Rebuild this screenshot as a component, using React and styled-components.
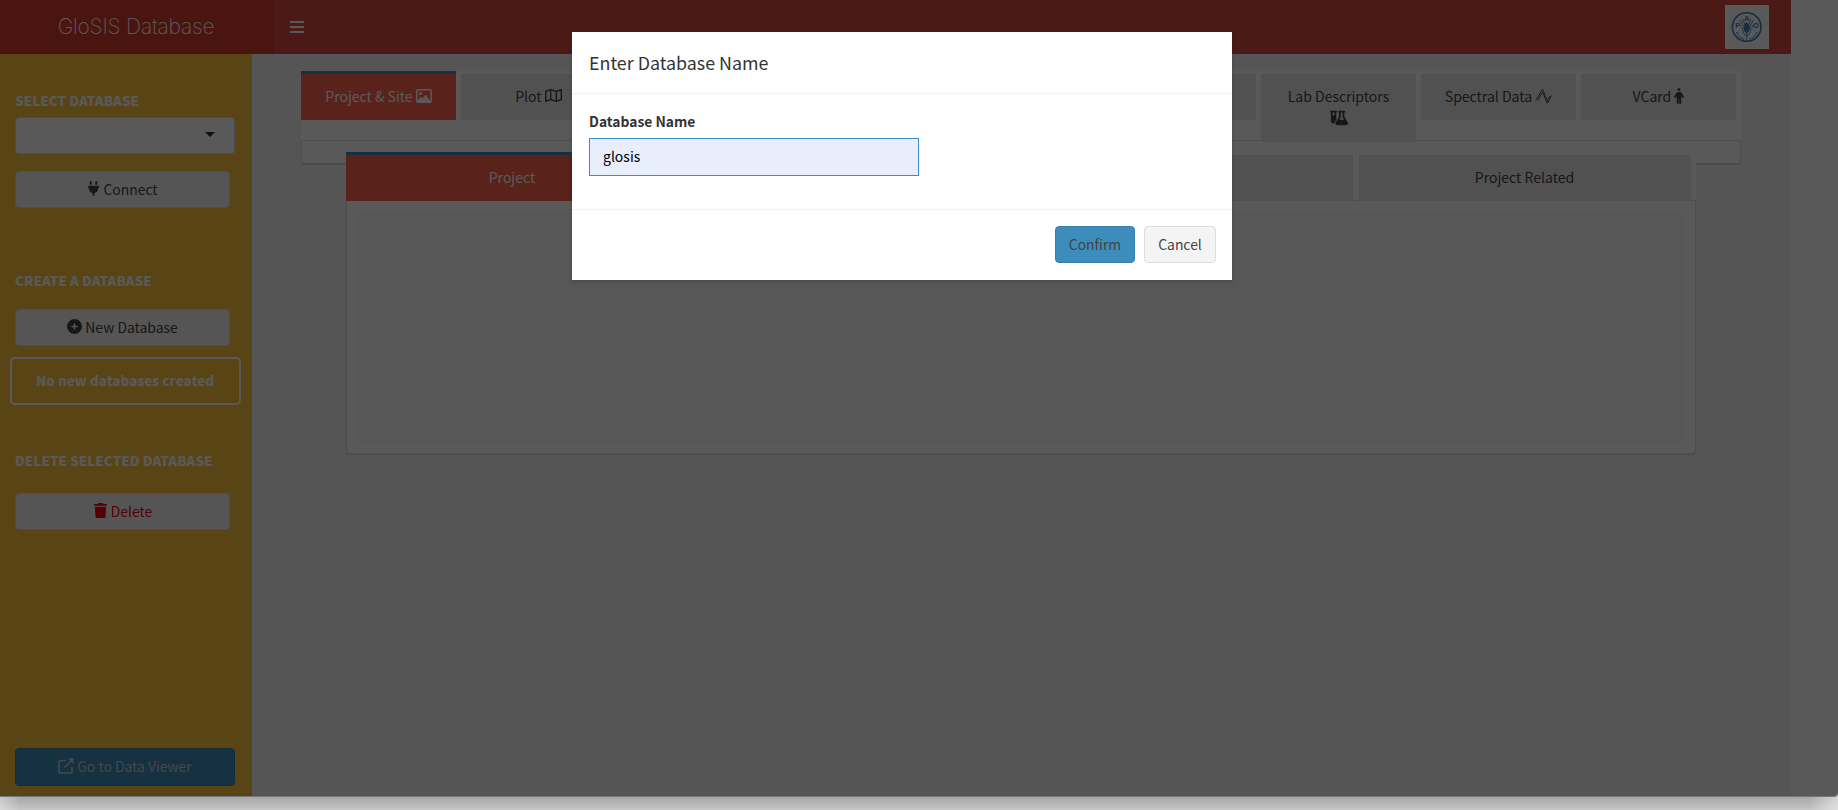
import React from "react";
import styled, { createGlobalStyle } from "styled-components";
import { FaPlug, FaCirclePlus, FaTrash, FaRegImage, FaRegMap, FaPerson, FaFlaskVial } from "react-icons/fa6";

const Global = createGlobalStyle`
  * { box-sizing: border-box; }
  body { margin: 0; background: #c0c0c0; overflow: hidden; -webkit-font-smoothing: antialiased; }
  body, button, input { font-family: "Noto Sans CJK SC", "Noto Sans", sans-serif; font-size: 14px; line-height: 20px; }
`;

const Desktop = styled.div`
  height: 810px;
  width: 1838px;
  background:
    linear-gradient(90deg, rgba(235, 235, 235, 0.5), transparent 20px, transparent 1810px, rgba(235, 235, 235, 0.7)),
    linear-gradient(#a8a8a8, #a8a8a8 797px, #c6c6c6 810px);
`;
const Window = styled.div`
  position: relative;
  width: 1838px;
  height: 796px;
  overflow: hidden;
  background: #fff;
  display: flex;
  flex-direction: column;
  border-radius: 0 0 4px 0;
  box-shadow: 0 1px 0 #77777a;
`;
const Header = styled.header`
  display: flex;
  width: 1791px;
  height: 54px;
  flex: none;
  background: #d94c40;
`;
const Brand = styled.div`
  width: 274px;
  background: #d43a2c;
  color: #fff;
  font: 200 21px/53px Inter, "Liberation Sans", sans-serif;
  letter-spacing: -0.22px;
  text-align: center;
  padding-right: 2px;
`;
const Nav = styled.div`
  flex: 1;
  display: flex;
  align-items: center;
  justify-content: space-between;
  padding: 0 22px 0 16px;
  color: #fff;
`;
const Emblem = styled.div`
  width: 44px;
  height: 44px;
  background: #fff;
`;
const Body = styled.div`
  display: flex;
  flex: 1;
  width: 1791px;
  background: #f4f4f4;
`;
const Sidebar = styled.aside`
  width: 252px;
  background: #fdc43c;
  padding: 36px 10px 10px 15px;
  display: flex;
  flex-direction: column;
`;
const Heading = styled.div`
  color: #fff;
  font-weight: 900;
  font-size: 13.5px;
  line-height: 20px;
  white-space: nowrap;
  margin-top: ${(p) => p.$gap || 0}px;
`;
const Select = styled.div`
  width: 220px;
  height: 37px;
  margin-top: 7px;
  background: #fff;
  border: 1px solid #d9dde0;
  border-radius: 4px;
  display: flex;
  align-items: center;
  justify-content: flex-end;
  padding: 0 19px 2px 0;
  color: #333;
`;
const Button = styled.button`
  display: flex;
  align-items: center;
  justify-content: center;
  gap: 3px;
  width: ${(p) => p.$w || 215}px;
  height: ${(p) => p.$h || 37}px;
  flex: none;
  padding: 0 0 2px;
  margin-top: ${(p) => p.$gap || 0}px;
  border-radius: 4px;
  border: 1px solid ${(p) => (p.$primary ? "#367fa9" : "#ddd")};
  background: ${(p) => (p.$primary ? "#3c8dbc" : "#f4f4f4")};
  color: ${(p) => p.$color || "#444"};
  font-size: 13.9px;
`;
const PlugIcon = styled(FaPlug)`
  margin: 0 -1px;
`;
const Notice = styled.div`
  width: 231px;
  height: 48px;
  margin: 11px 0 0 -5px;
  border: 2px solid #fff;
  border-radius: 5px;
  color: #fff;
  font-weight: 900;
  font-size: 13.5px;
  line-height: 43px;
  text-align: center;
  padding-right: 1px;
`;
const Push = styled.div`
  margin-top: auto;
`;
const Content = styled.main`
  flex: 1;
  padding: 17px 50px 0 49px;
`;
const TabBar = styled.div`
  display: flex;
  align-items: flex-start;
  gap: ${(p) => p.$gap}px;
  height: ${(p) => p.$h}px;
  padding-right: 5px;
  background: #fff;
`;
const Tab = styled.div`
  position: relative;
  flex: 1 1 0;
  height: ${(p) => (p.$tall ? 71 : 49)}px;
  border-top: 3px solid ${(p) => (p.$active ? "#3c8dbc" : "#fff")};
  background: ${(p) => (p.$active ? "#ff634e" : "#e8e8e8")};
  background-clip: padding-box;
  color: ${(p) => (p.$active ? "#fff" : "#444")};
  padding: 12px 20px;
  text-align: center;
  line-height: 21px;
  white-space: ${(p) => (p.$tall ? "normal" : "nowrap")};
  svg { vertical-align: ${(p) => (p.$tall ? -4 : -2)}px; }
`;
const PersonIcon = styled(FaPerson)`
  margin: 0 -3px;
`;
const OuterPanel = styled.div`
  height: 24px;
  background: #fff;
  border: 1px solid #dcdcdc;
  border-bottom-color: #d4d4d4;
  border-radius: 0 0 4px 4px;
  box-shadow: 0 1px 1px rgba(0, 0, 0, 0.1);
`;
const InnerBox = styled.div`
  position: relative;
  margin: -12px 45.5px 0 45px;
`;
const InnerPanel = styled.div`
  height: 254px;
  background: #fff;
  border: 1px solid #dedede;
  border-radius: 0 0 4px 4px;
  box-shadow: 0 1px 1px rgba(0, 0, 0, 0.12);
  padding: 11px;
`;
const Well = styled.div`
  height: 230px;
  background: #f8f8f8;
`;
const Backdrop = styled.div`
  position: absolute;
  inset: 0;
  background: rgba(0, 0, 0, 0.65);
`;
const Modal = styled.div`
  width: 660px;
  height: 248px;
  margin: 32px 0 0 572px;
  background: #fff;
  box-shadow: 0 2px 4px rgba(0, 0, 0, 0.15);
  color: #333;
  display: flex;
  flex-direction: column;
`;
const ModalTitle = styled.div`
  height: 62px;
  border-bottom: 1px solid #f1f1f1;
  padding: 0 17px;
  font-size: 17.85px;
  line-height: 60px;
`;
const ModalBody = styled.div`
  flex: 1;
  padding: 17px 17px 0;
`;
const Label = styled.label`
  display: block;
  font-weight: 700;
  font-size: 13.85px;
  line-height: 20px;
  height: 27px;
`;
const Input = styled.input`
  display: block;
  width: 330px;
  height: 38px;
  padding: 0 13px 2px;
  border: 1px solid #3c8dbc;
  background: #e8eefc;
  color: #000;
  outline: none;
`;
const Footer = styled.div`
  height: 71px;
  border-top: 1px solid #f1f1f1;
  display: flex;
  justify-content: flex-end;
  gap: 9px;
  padding: 16px 16px 0;
`;

const Bars = () => (
  <svg width="14" height="12" viewBox="0 0 14 12" fill="none" stroke="currentColor" strokeWidth="2">
    <path d="M0 1H14M0 6H14M0 11H14" />
  </svg>
);

const Caret = () => (
  <svg width="10" height="5" viewBox="0 0 10 5">
    <path d="M0 0H10L5 5Z" fill="currentColor" />
  </svg>
);

const OpenIcon = () => (
  <svg width="16" height="16" viewBox="0 0 16 16" fill="none" stroke="currentColor" strokeWidth="1.7">
    <path d="M8 2.500H3A2 2 0 0 0 1 4.500V13a2 2 0 0 0 2 2h9a2 2 0 0 0 2-2V9M6.500 9.500 14 2" />
    <path d="M10 .3H15.700V6Z" fill="currentColor" stroke="none" />
  </svg>
);

const Spectrum = () => (
  <svg width="17" height="16" viewBox="0 0 17 16" fill="none" stroke="currentColor" strokeWidth="0.9">
    <path d="M.8 12.500 7.500 1l5.500 13.500L16.300 7.500M2.800 12.500 7.500 4 12.300 15.500M13 12l2-4" />
  </svg>
);

const Fao = () => (
  <svg width="44" height="44" viewBox="0 0 44 44" fill="none" stroke="#4681ba" strokeWidth="1.2">
    <circle cx="21.700" cy="22" r="14.300" strokeWidth="1.600" />
    <path strokeWidth="0.9" d="M21.700 36V17M21.700 31c-3-1-4-4-4-7M21.700 31c3-1 4-4 4-7M20 24l-5-9M23.400 24l5-9M20.500 21l-3-7M23 21l3-7M18 24l-4-5M25.500 24l4-5" />
    <ellipse cx="21.700" cy="23" rx="3" ry="5" fill="#4681ba" stroke="none" />
    <path strokeWidth="1.300" strokeDasharray="1.300 1" d="M11.500 27q2.500 5.500 7.500 7M32 27q-2.500 5.500-7.500 7" />
    <g fill="#4681ba" stroke="none" fontFamily="Liberation Sans" fontWeight="700" fontSize="7.5" textAnchor="middle">
      <text x="21.700" y="16">A</text>
      <text x="12.500" y="22.500">F</text>
      <text x="31" y="22.500">O</text>
    </g>
  </svg>
);

export default function App() {
  return (
    <Desktop>
      <Global />
      <Window>
        <Header>
          <Brand>GloSIS Database</Brand>
          <Nav>
            <Bars />
            <Emblem><Fao /></Emblem>
          </Nav>
        </Header>
        <Body>
          <Sidebar>
            <Heading>SELECT DATABASE</Heading>
            <Select><Caret /></Select>
            <Button $gap={17}><PlugIcon size={15} />Connect</Button>
            <Heading $gap={62}>CREATE A DATABASE</Heading>
            <Button $gap={19}><FaCirclePlus size={15} />New Database</Button>
            <Notice>No new databases created</Notice>
            <Heading $gap={45}>DELETE SELECTED DATABASE</Heading>
            <Button $gap={23} $color="#f00014"><FaTrash size={15} />Delete</Button>
            <Push>
              <Button $primary $w={220} $h={38} $color="#c5cdd2"><OpenIcon />Go to Data Viewer</Button>
            </Push>
          </Sidebar>
          <Content>
            <TabBar $gap={5} $h={69}>
              <Tab $active>Project &amp; Site <FaRegImage size={16} /></Tab>
              <Tab>Plot <FaRegMap size={17} /></Tab>
              <Tab />
              <Tab />
              <Tab />
              <Tab />
              <Tab $tall>Lab Descriptors <FaFlaskVial size={18} /></Tab>
              <Tab>Spectral Data <Spectrum /></Tab>
              <Tab>VCard <PersonIcon size={16} /></Tab>
            </TabBar>
            <OuterPanel />
            <InnerBox>
              <TabBar $gap={5.5} $h={48}>
                <Tab $active>Project</Tab>
                <Tab />
                <Tab />
                <Tab>Project Related</Tab>
              </TabBar>
              <InnerPanel><Well /></InnerPanel>
            </InnerBox>
          </Content>
        </Body>
        <Backdrop>
          <Modal>
            <ModalTitle>Enter Database Name</ModalTitle>
            <ModalBody>
              <Label>Database Name</Label>
              <Input defaultValue="glosis" />
            </ModalBody>
            <Footer>
              <Button $primary $w={80}>Confirm</Button>
              <Button $w={72}>Cancel</Button>
            </Footer>
          </Modal>
        </Backdrop>
      </Window>
    </Desktop>
  );
}
